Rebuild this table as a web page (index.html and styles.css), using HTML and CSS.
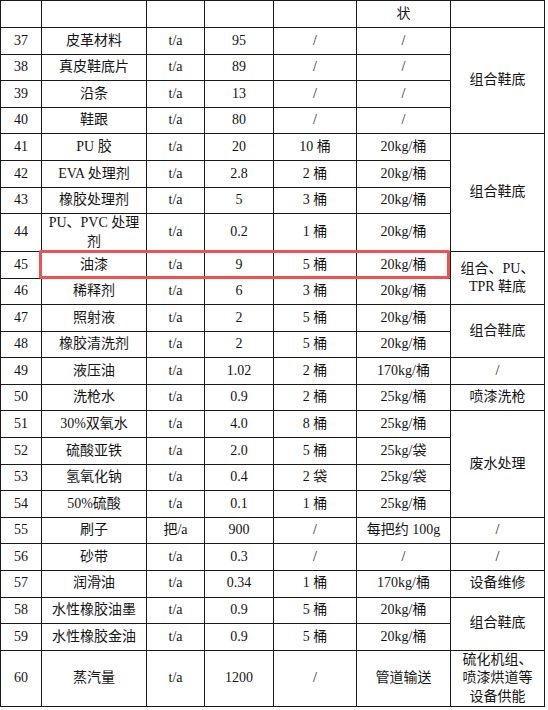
FILE: index.html
```html
<!DOCTYPE html>
<html lang="zh-CN">
<head>
<meta charset="utf-8">
<title>原辅材料一览表</title>
<link rel="stylesheet" href="styles.css">
</head>
<body>
<div class="page">
<table class="materials">
<colgroup>
<col class="c-no"><col class="c-name"><col class="c-unit"><col class="c-amt"><col class="c-max"><col class="c-pack"><col class="c-use">
</colgroup>
<tbody>
<tr class="r-head"><td></td><td></td><td></td><td></td><td></td><td class="head-txt">状</td><td></td></tr>
<tr><td>37</td><td>皮革材料</td><td>t/a</td><td>95</td><td>/</td><td>/</td><td rowspan="4">组合鞋底</td></tr>
<tr><td>38</td><td>真皮鞋底片</td><td>t/a</td><td>89</td><td>/</td><td>/</td></tr>
<tr><td>39</td><td>沿条</td><td>t/a</td><td>13</td><td>/</td><td>/</td></tr>
<tr class="r-short"><td>40</td><td>鞋跟</td><td>t/a</td><td>80</td><td>/</td><td>/</td></tr>
<tr><td>41</td><td>PU 胶</td><td>t/a</td><td>20</td><td>10 桶</td><td>20kg/桶</td><td rowspan="4">组合鞋底</td></tr>
<tr><td>42</td><td>EVA 处理剂</td><td>t/a</td><td>2.8</td><td>2 桶</td><td>20kg/桶</td></tr>
<tr class="r-short"><td>43</td><td>橡胶处理剂</td><td>t/a</td><td>5</td><td>3 桶</td><td>20kg/桶</td></tr>
<tr class="r-tall"><td>44</td><td>PU、PVC 处理剂</td><td>t/a</td><td>0.2</td><td>1 桶</td><td>20kg/桶</td></tr>
<tr><td>45</td><td>油漆</td><td>t/a</td><td>9</td><td>5 桶</td><td>20kg/桶</td><td rowspan="2">组合、PU、TPR 鞋底</td></tr>
<tr class="r-short"><td>46</td><td>稀释剂</td><td>t/a</td><td>6</td><td>3 桶</td><td>20kg/桶</td></tr>
<tr><td>47</td><td>照射液</td><td>t/a</td><td>2</td><td>5 桶</td><td>20kg/桶</td><td rowspan="2">组合鞋底</td></tr>
<tr><td>48</td><td>橡胶清洗剂</td><td>t/a</td><td>2</td><td>5 桶</td><td>20kg/桶</td></tr>
<tr class="r-short"><td>49</td><td>液压油</td><td>t/a</td><td>1.02</td><td>2 桶</td><td>170kg/桶</td><td>/</td></tr>
<tr><td>50</td><td>洗枪水</td><td>t/a</td><td>0.9</td><td>2 桶</td><td>25kg/桶</td><td>喷漆洗枪</td></tr>
<tr><td>51</td><td>30%双氧水</td><td>t/a</td><td>4.0</td><td>8 桶</td><td>25kg/桶</td><td rowspan="4">废水处理</td></tr>
<tr class="r-short"><td>52</td><td>硫酸亚铁</td><td>t/a</td><td>2.0</td><td>5 桶</td><td>25kg/袋</td></tr>
<tr><td>53</td><td>氢氧化钠</td><td>t/a</td><td>0.4</td><td>2 袋</td><td>25kg/袋</td></tr>
<tr><td>54</td><td>50%硫酸</td><td>t/a</td><td>0.1</td><td>1 桶</td><td>25kg/桶</td></tr>
<tr class="r-short"><td>55</td><td>刷子</td><td>把/a</td><td>900</td><td>/</td><td>每把约 100g</td><td>/</td></tr>
<tr><td>56</td><td>砂带</td><td>t/a</td><td>0.3</td><td>/</td><td>/</td><td>/</td></tr>
<tr><td>57</td><td>润滑油</td><td>t/a</td><td>0.34</td><td>1 桶</td><td>170kg/桶</td><td>设备维修</td></tr>
<tr class="r-short"><td>58</td><td>水性橡胶油墨</td><td>t/a</td><td>0.9</td><td>5 桶</td><td>20kg/桶</td><td rowspan="2">组合鞋底</td></tr>
<tr><td>59</td><td>水性橡胶金油</td><td>t/a</td><td>0.9</td><td>5 桶</td><td>20kg/桶</td></tr>
<tr class="r-big"><td>60</td><td>蒸汽量</td><td>t/a</td><td>1200</td><td>/</td><td>管道输送</td><td>硫化机组、喷漆烘道等设备供能</td></tr>
</tbody>
</table>
<div class="highlight"></div>
</div>
</body>
</html>
```
FILE: styles.css
```css
html, body {
  margin: 0;
  padding: 0;
  background: #ffffff;
}

.page {
  position: relative;
  width: 548px;
  height: 710px;
  overflow: hidden;
}

.materials {
  border-collapse: collapse;
  table-layout: fixed;
  width: 545px;
  font-family: "Liberation Serif", "Noto Sans CJK SC", serif;
  font-size: 14px;
  line-height: 18.5px;
  color: #141414;
  border: 1px solid #555;
}

.c-no { width: 41px; }
.c-name { width: 105px; }
.c-unit { width: 58px; }
.c-amt { width: 69px; }
.c-max { width: 83px; }
.c-pack { width: 94px; }
.c-use { width: 94px; }

.materials td {
  border: 1px solid #1a1a1a;
  padding: 0 6px;
  text-align: center;
  vertical-align: middle;
}

.materials tr { height: 26.67px; }
.materials tr.r-head { height: 27px; }
.materials tr.r-short { height: 26.4px; }
.materials tr.r-tall { height: 37px; }
.materials tr.r-big { height: 56px; }

.head-txt {
  padding-bottom: 4px;
}

.highlight {
  position: absolute;
  left: 39px;
  top: 250px;
  width: 411px;
  height: 29px;
  box-sizing: border-box;
  border: 3px solid #ef5252;
  border-radius: 2px;
}
```
